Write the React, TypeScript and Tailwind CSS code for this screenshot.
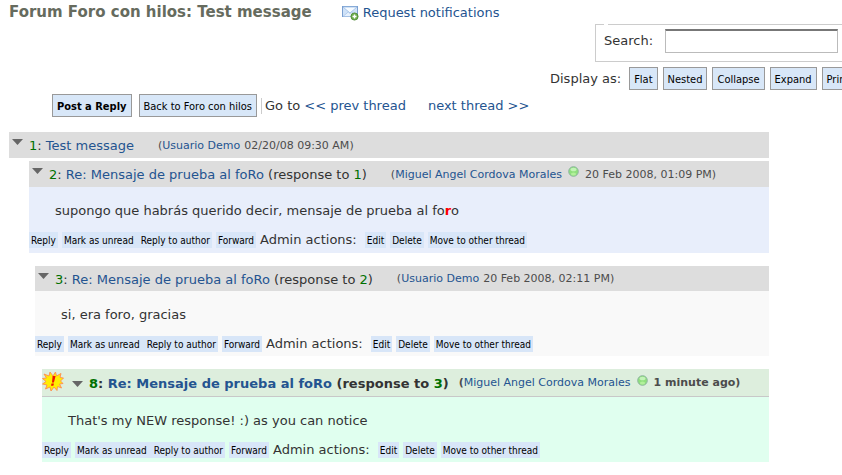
import type { ReactNode } from "react";

type Thread = {
  id: number;
  title: string;
  responseTo?: number;
  author: string;
  date: string;
  online?: boolean;
  isNew?: boolean;
  indent: string;
  headerClass: string;
  bodyClass?: string;
  body?: ReactNode;
};

const threads: Thread[] = [
  {
    id: 1,
    title: "Test message",
    author: "Usuario Demo",
    date: "02/20/08 09:30 AM",
    indent: "mb-[3px]",
    headerClass: "h-[26px] bg-[#dddddd]",
  },
  {
    id: 2,
    title: "Re: Mensaje de prueba al foRo",
    responseTo: 1,
    author: "Miguel Angel Cordova Morales",
    date: "20 Feb 2008, 01:09 PM",
    online: true,
    indent: "ml-5 mb-[13px]",
    headerClass: "h-[26px] bg-[#dddddd]",
    bodyClass: "bg-[#e8eefb]",
    body: (
      <>
        supongo que habrás querido decir, mensaje de prueba al fo
        <strong className="text-[#ff0000]">r</strong>o
      </>
    ),
  },
  {
    id: 3,
    title: "Re: Mensaje de prueba al foRo",
    responseTo: 2,
    author: "Usuario Demo",
    date: "20 Feb 2008, 02:11 PM",
    indent: "ml-[26px] mb-[13px]",
    headerClass: "h-[25px] bg-[#dddddd]",
    bodyClass: "bg-[#f9f9f9]",
    body: "si, era foro, gracias",
  },
  {
    id: 8,
    title: "Re: Mensaje de prueba al foRo",
    responseTo: 3,
    author: "Miguel Angel Cordova Morales",
    date: "1 minute ago",
    online: true,
    isNew: true,
    indent: "ml-[33px]",
    headerClass: "h-7 border-b border-[#c8c8c8] bg-[#ddeedd] font-bold",
    bodyClass: "bg-[#e0ffef]",
    body: "That's my NEW response! :) as you can notice",
  },
];

const displayModes = ["Flat", "Nested", "Collapse", "Expand", "Print View"];

function MailIcon() {
  return (
    <svg width="17" height="16" viewBox="0 0 17 16" className="shrink-0" aria-hidden="true">
      <rect x="0.5" y="1.5" width="15" height="10" fill="#cfe2f8" stroke="#7a9fd0" />
      <path d="M1 2h14L8 8z" fill="#f6fbff" stroke="#9dbce4" strokeWidth="0.8" />
      <path d="M1 11.500L6.200 7 8 8.500 9.800 7 15 11.500z" fill="#e6f1fd" stroke="#9dbce4" strokeWidth="0.6" />
      <circle cx="12.500" cy="11.500" r="3.600" fill="#6fae4b" stroke="#4a8530" strokeWidth="0.8" />
      <path d="M12.500 9.500v4M10.500 11.500h4" stroke="#fff" strokeWidth="1.4" />
    </svg>
  );
}

function NewIcon() {
  return (
    <svg width="22" height="21" viewBox="0 0 22 21" className="shrink-0 self-start" aria-label="New" role="img">
      <path
        d="M11 5L13.500 1l1 4L19 2.500l-1 4 3.500.5-3 3L21 12.500l-3.500.5 2 4-4-1.500-.5 4-3-3.500L9 20l-1-4-4.500 2 1.500-4-4.500-1 3.500-2.500L.5 7.500l4-.5L2 3l5 2 1-4z"
        fill="#ffee00"
        stroke="#ff8a50"
        strokeWidth="0.9"
      />
      <path d="M10.600 5h3l-1.700 6.500h-1.900z" fill="#ee1100" />
      <path d="M9.500 12.500h2.400l-.5 2.200H9z" fill="#ee1100" />
    </svg>
  );
}

function OnlineIcon() {
  return (
    <svg width="11" height="11" viewBox="0 0 11 11" className="mx-[6px] mb-[7px] shrink-0" aria-label="Online" role="img">
      <circle cx="5.500" cy="5.500" r="4.800" fill="#8fe07c" stroke="#8db3a0" strokeWidth="1" />
      <ellipse cx="5.500" cy="3.500" rx="3" ry="1.800" fill="#c3f3b8" />
      <ellipse cx="5.500" cy="8" rx="2.600" ry="1.500" fill="#b2f09b" />
    </svg>
  );
}

function ToggleButton({ className }: { className: string }) {
  return (
    <button type="button" aria-label="Toggle message" className={className}>
      <svg width="11" height="6" viewBox="0 0 11 6" className="block">
        <path d="M0 0h11L5.500 6z" fill="#666" />
      </svg>
    </button>
  );
}

function ToolbarButton({ children, bold }: { children: ReactNode; bold?: boolean }) {
  return (
    <button
      type="button"
      className={`h-[23px] shrink-0 whitespace-nowrap border border-[#999999] bg-[#d8e7f8] px-1 pt-[2px] font-['DejaVu_Sans_Condensed','DejaVu_Sans',sans-serif] text-[11px] leading-4 text-black ${
        bold ? "font-bold" : ""
      }`}
    >
      {children}
    </button>
  );
}

function ActionButton({ children }: { children: ReactNode }) {
  return (
    <button
      type="button"
      className="h-4 shrink-0 whitespace-nowrap bg-[#d8e6f8] px-[2px] pt-[2px] font-['DejaVu_Sans_Condensed','DejaVu_Sans',sans-serif] text-[10px] leading-3 text-black"
    >
      {children}
    </button>
  );
}

function MessageActions() {
  return (
    <div className="flex h-4 items-center gap-1">
      <ActionButton>Reply</ActionButton>
      <div className="flex">
        <ActionButton>Mark as unread</ActionButton>
        <span className="w-[3px] bg-[#d8e6f8]" />
        <ActionButton>Reply to author</ActionButton>
      </div>
      <ActionButton>Forward</ActionButton>
      <span className="mr-1 leading-4">Admin actions:</span>
      <ActionButton>Edit</ActionButton>
      <ActionButton>Delete</ActionButton>
      <ActionButton>Move to other thread</ActionButton>
    </div>
  );
}

function Message({ thread }: { thread: Thread }) {
  return (
    <article className={thread.indent}>
      <header className={`flex items-center whitespace-nowrap pt-[2px] ${thread.headerClass}`}>
        {thread.isNew && <NewIcon />}
        <ToggleButton className={thread.isNew ? "ml-2 mr-[6px]" : "ml-[3px] mr-[6px] mb-2"} />
        <h2>
          <span className="text-[#007000]">{thread.id}</span>:{" "}
          <a href={`#message-${thread.id}`} className="text-[#245490]">
            {thread.title}
          </a>
          {thread.responseTo && (
            <>
              {" "}
              (response to <span className="text-[#007000]">{thread.responseTo}</span>)
            </>
          )}
        </h2>
        <div
          className={`flex items-center text-[11px] text-[#4c4c4c] ${thread.isNew ? "ml-[10px]" : "ml-6"}`}
        >
          (
          <a href="#user" className="font-normal text-[#245490]">
            {thread.author}
          </a>
          {thread.online ? <OnlineIcon /> : <span className="w-1" />}
          {thread.date})
        </div>
      </header>
      {thread.body && (
        <div className={`pt-3 pb-1 ${thread.isNew || thread.id === 3 ? "" : "pb-[5px]"} ${thread.bodyClass}`}>
          <p className="mb-[10px] pl-[26px] leading-[23px]">{thread.body}</p>
          <MessageActions />
        </div>
      )}
    </article>
  );
}

export default function App() {
  return (
    <main className="overflow-hidden bg-white pl-[9px] font-['DejaVu_Sans',sans-serif] text-[13px] text-[#333333]">
      <div className="flex h-6 items-center whitespace-nowrap">
        <h1 className="text-[15px] font-bold text-[#666b5e]">Forum Foro con hilos: Test message</h1>
        <a href="#notifications" className="ml-[30px] flex items-center gap-1 pt-[2px] text-[#245490]">
          <MailIcon />
          Request notifications
        </a>
      </div>

      <div className="ml-auto w-[247px]">
        <fieldset className="h-[38px] w-80 border border-[#cccccc] pl-2">
          <legend className="h-px w-1" />
          <div className="mt-1 flex items-center">
            <label htmlFor="search" className="w-[61px]">
              Search:
            </label>
            <input
              id="search"
              type="text"
              className="h-6 w-[173px] border border-t-2 border-[#bbbbbb] border-t-[#777777] bg-white px-1"
            />
          </div>
        </fieldset>
      </div>

      <div className="mt-[5px] ml-auto flex w-[292px] items-center gap-[5px] whitespace-nowrap">
        <span className="mr-[3px]">Display as:</span>
        {displayModes.map((mode) => (
          <ToolbarButton key={mode}>{mode}</ToolbarButton>
        ))}
      </div>

      <nav className="mt-1 flex items-center whitespace-nowrap pl-[43px]">
        <div className="flex gap-[7px]">
          <ToolbarButton bold>Post a Reply</ToolbarButton>
          <ToolbarButton>Back to Foro con hilos</ToolbarButton>
        </div>
        <span className="ml-1 h-4 border-l border-[#cccccc] pl-[3px] leading-4">Go to</span>
        <a href="#prev" className="ml-1 text-[#245490]">
          &lt;&lt; prev thread
        </a>
        <a href="#next" className="ml-[22px] text-[#245490]">
          next thread &gt;&gt;
        </a>
      </nav>

      <section className="mt-[15px] mr-[73px]">
        {threads.map((thread) => (
          <Message key={thread.id} thread={thread} />
        ))}
      </section>
    </main>
  );
}
